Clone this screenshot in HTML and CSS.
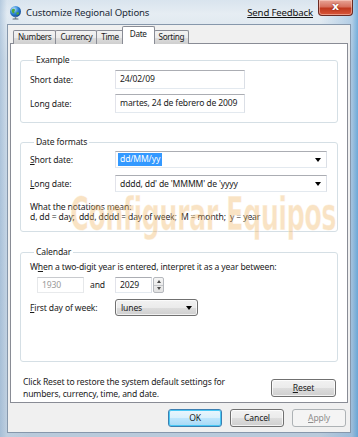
FILE: index.html
```html
<!DOCTYPE html>
<html>
<head>
<meta charset="utf-8">
<link rel="stylesheet" href="styles.css">
</head>
<body>
<div class="window">
  <div class="titlebar">
    <svg class="appicon" width="15" height="15" viewBox="0 0 15 15">
      <defs>
        <radialGradient id="g1" cx="0.35" cy="0.3" r="0.8">
          <stop offset="0" stop-color="#bfe6ff"/>
          <stop offset="0.5" stop-color="#2f86d6"/>
          <stop offset="1" stop-color="#0d3f8a"/>
        </radialGradient>
      </defs>
      <circle cx="7.5" cy="6.5" r="5.5" fill="url(#g1)"/>
      <path d="M4 4.5c1-1 2.5-1 3 .2.3 1-1 1.2-.6 2.3.3.8-.6 1.6-1.4 1.2C4 7.6 3.3 5.6 4 4.5z" fill="#4fa83a"/>
      <path d="M8.6 7.4c.8-.4 2.2-.2 2.5.6.2.8-.9 1.8-1.8 1.8-.6 0-1.2-1.6-.7-2.4z" fill="#4fa83a"/>
      <rect x="6.7" y="11.5" width="1.6" height="2.5" fill="#7a8a99"/>
      <rect x="4.5" y="13.4" width="6" height="1.2" rx="0.5" fill="#5d6b78"/>
    </svg>
    <span class="title">Customize Regional Options</span>
    <span class="spacer"></span>
    <a class="feedback">Send Feedback</a>
    <div class="close"><span>x</span></div>
  </div>
  <div class="client">
    <div class="tabs">
      <div class="tab">Numbers</div>
      <div class="tab">Currency</div>
      <div class="tab">Time</div>
      <div class="tab active">Date</div>
      <div class="tab">Sorting</div>
    </div>
    <div class="panel">
      <fieldset class="group g-example">
        <legend>Example</legend>
        <div class="row">
          <span class="label">Short date:</span>
          <div class="textbox">24/02/09</div>
        </div>
        <div class="row">
          <span class="label">Long date:</span>
          <div class="textbox">martes, 24 de febrero de 2009</div>
        </div>
      </fieldset>

      <fieldset class="group g-formats">
        <legend>Date formats</legend>
        <div class="row">
          <span class="label"><u>S</u>hort date:</span>
          <div class="combo edit"><span class="sel">dd/MM/yy</span><span class="arrow"></span></div>
        </div>
        <div class="row">
          <span class="label"><u>L</u>ong date:</span>
          <div class="combo edit"><span class="val">dddd, dd' de 'MMMM' de 'yyyy</span><span class="arrow"></span></div>
        </div>
        <div class="notes">
          <div>What the notations mean:</div>
          <div>d, dd = day;&nbsp; ddd, dddd = day of week;&nbsp; M = month;&nbsp; y = year</div>
        </div>
      </fieldset>

      <fieldset class="group g-calendar">
        <legend>Calendar</legend>
        <div class="line">W<u>h</u>en a two-digit year is entered, interpret it as a year between:</div>
        <div class="years">
          <div class="textbox disabled y1">1930</div>
          <span class="and">and</span>
          <div class="textbox y2">2029</div>
          <div class="spin">
            <div class="spinbtn"><span class="up"></span></div>
            <div class="spinbtn"><span class="down"></span></div>
          </div>
        </div>
        <div class="row">
          <span class="label"><u>F</u>irst day of week:</span>
          <div class="combo btn"><span class="val">lunes</span><span class="arrow"></span></div>
        </div>
      </fieldset>

      <div class="reset-row">
        <div class="reset-text">Click Reset to restore the system default settings for<br>numbers, currency, time, and date.</div>
        <div class="button reset"><u>R</u>eset</div>
      </div>
    </div>
    <div class="buttons">
      <div class="button default">OK</div>
      <div class="button">Cancel</div>
      <div class="button disabled"><u>A</u>pply</div>
    </div>
    <div class="watermark">Configurar Equipos</div>
  </div>
</div>
</body>
</html>
```

FILE: styles.css
```css
* { box-sizing: border-box; }
html, body { margin: 0; padding: 0; }
body {
  width: 358px;
  height: 437px;
  overflow: hidden;
  font-family: "Noto Sans", "Open Sans", sans-serif;
  font-size: 8.6px;
  letter-spacing: -0.15px;
  color: #1b1b1b;
}
.window {
  width: 358px;
  height: 437px;
  display: flex;
  flex-direction: column;
  background:
    linear-gradient(90deg, rgba(150,180,210,0.55) 0px, rgba(210,225,240,0.2) 7px, rgba(255,255,255,0) 30px, rgba(255,255,255,0) 320px, rgba(120,170,215,0.45) 352px, rgba(70,150,210,0.7) 358px),
    linear-gradient(180deg, #d9e4ee 0px, #e6edf3 14px, #cfdbe7 60px, #c3d3e3 200px, #b9cadb 437px);
}
.titlebar {
  height: 24px;
  flex: none;
  display: flex;
  align-items: flex-start;
  padding: 4px 0 0 8px;
}
.appicon { flex: none; margin-top: 1px; }
.title {
  margin-left: 3px;
  margin-top: 2px;
  font-size: 9.6px;
  color: #1c2a38;
}
.spacer { flex: 1; }
.feedback {
  margin-top: 2px;
  font-size: 9.6px;
  color: #111;
  text-decoration: underline;
  margin-right: 5px;
}
.close {
  width: 35px;
  height: 16px;
  margin-top: -4px;
  margin-right: 5px;
  border: 1px solid #6b2a22;
  border-top: none;
  border-radius: 0 0 4px 4px;
  background: linear-gradient(180deg, #e8a597 0%, #d7705d 45%, #c0391f 55%, #d8573a 100%);
  box-shadow: inset 0 0 0 1px rgba(255,220,210,0.5);
  display: flex;
  align-items: center;
  justify-content: center;
}
.close span {
  color: #fff;
  font-family: "DejaVu Sans", sans-serif;
  font-weight: bold;
  font-size: 11px;
  line-height: 1;
  margin-top: -2px;
  text-shadow: 0 0 2px #7a1a0a;
}
.client {
  position: relative;
  flex: 1;
  margin: 0 7px 4px 7px;
  background: #f0f0f0;
  border: 1px solid #8697ab;
  display: flex;
  flex-direction: column;
  padding: 1px 1px 0 2px;
  overflow: hidden;
}
.tabs {
  display: flex;
  align-items: flex-end;
  height: 18px;
  padding-left: 3px;
  position: relative;
  z-index: 2;
  margin-bottom: -1px;
}
.tab {
  height: 14px;
  padding: 0 4px;
  border: 1px solid #898c95;
  border-bottom: none;
  margin-right: -1px;
  background: linear-gradient(180deg, #f2f2f2 0%, #ebebeb 50%, #dddddd 51%, #cfcfcf 100%);
  line-height: 12px;
  border-radius: 2px 2px 0 0;
  font-size: 8.2px;
  letter-spacing: -0.35px;
}
.tab.active {
  height: 18px;
  background: #fff;
  margin: 0 0 0 -1px;
  padding: 0 7px;
  position: relative;
  z-index: 2;
  line-height: 14px;
}
.tab.active + .tab { margin-left: -1px; }
.panel {
  width: 338px;
  height: 360px;
  background: #fff;
  border: 1px solid #898c95;
  padding: 10px 9px 0 9px;
  display: flex;
  flex-direction: column;
}
.group {
  margin: 0;
  border: 1px solid #d5dfe5;
  border-radius: 3px;
  padding: 0 9px;
  min-width: 0;
}
.group legend {
  padding: 0 2px;
  margin-left: 4px;
  line-height: 12px;
}
.row {
  display: flex;
  align-items: center;
}
.label {
  width: 85px;
  flex: none;
}
.g-example { height: 69px; padding-top: 4px; }
.g-example .row + .row { margin-top: 5px; }
.textbox {
  height: 19px;
  width: 130px;
  background: #fff;
  border: 1px solid;
  border-color: #abadb3 #dbdfe6 #e3e9ef #e2e3ea;
  padding-left: 4px;
  line-height: 17px;
  white-space: nowrap;
  overflow: hidden;
}
.g-formats { margin-top: 13px; height: 96px; padding-top: 3px; }
.g-formats .row + .row { margin-top: 7px; }
.combo {
  height: 17px;
  display: flex;
  align-items: center;
  position: relative;
}
.combo.edit {
  width: 212px;
  background: #fff;
  border: 1px solid;
  border-color: #abadb3 #dbdfe6 #e3e9ef #e2e3ea;
  padding-left: 2px;
}
.combo .sel {
  background: #3399ff;
  color: #fff;
  padding: 0 2px;
  line-height: 13px;
}
.combo .val { padding-left: 2px; }
.arrow {
  position: absolute;
  right: 5px;
  top: 6px;
  width: 0;
  height: 0;
  border-left: 3.5px solid transparent;
  border-right: 3.5px solid transparent;
  border-top: 4px solid #000;
}
.notes {
  margin-top: 10px;
  line-height: 10px;
}
.g-calendar { margin-top: 14px; height: 116px; padding-top: 3px; }
.line { line-height: 12px; }
.years {
  display: flex;
  align-items: center;
  margin-top: 4px;
  margin-left: 7px;
}
.years .textbox { height: 16px; line-height: 14px; }
.y1 { width: 47px; }
.y1.disabled { color: #9a9a9a; border-color: #c8cace #e6e8ea #e8eaec #e6e8ea; }
.and { width: 31px; padding-left: 6px; }
.y2 { width: 37px; }
.spin {
  margin-left: 1px;
  width: 11px;
  height: 16px;
  display: flex;
  flex-direction: column;
  border: 1px solid #b5b8bd;
  border-radius: 2px;
  background: linear-gradient(180deg, #f5f5f5, #e2e2e2);
}
.spinbtn {
  flex: 1;
  display: flex;
  align-items: center;
  justify-content: center;
}
.spinbtn + .spinbtn { border-top: 1px solid #c4c6c9; }
.up { width: 0; height: 0; border-left: 2px solid transparent; border-right: 2px solid transparent; border-bottom: 3px solid #4a4a4a; }
.down { width: 0; height: 0; border-left: 2px solid transparent; border-right: 2px solid transparent; border-top: 3px solid #4a4a4a; }
.g-calendar .row { margin-top: 6px; }
.combo.btn {
  width: 83px;
  border: 1px solid #707070;
  border-radius: 3px;
  background: linear-gradient(180deg, #f2f2f2 0%, #ebebeb 50%, #dddddd 51%, #cfcfcf 100%);
  box-shadow: inset 0 0 0 1px rgba(255,255,255,0.7);
  padding-left: 3px;
}
.reset-row {
  display: flex;
  align-items: center;
  margin-top: 14px;
  padding-left: 3px;
}
.reset-text { flex: 1; line-height: 12px; }
.button {
  width: 54px;
  height: 18px;
  border: 1px solid #707070;
  border-radius: 3px;
  background: linear-gradient(180deg, #f2f2f2 0%, #ebebeb 50%, #dddddd 51%, #cfcfcf 100%);
  box-shadow: inset 0 0 0 1px rgba(255,255,255,0.75);
  display: flex;
  align-items: center;
  justify-content: center;
}
.button.reset { width: 65px; margin-right: 2px; }
.buttons {
  display: flex;
  justify-content: flex-end;
  gap: 8px;
  padding: 6px 3px 0 0;
}
.button.default {
  border-color: #3c7fb1;
  background: linear-gradient(180deg, #eaf6fd 0%, #d9f0fc 50%, #bee6fd 51%, #a7d9f5 100%);
  box-shadow: inset 0 0 0 1px #48c8f5;
}
.button.disabled {
  color: #8d8d8d;
  border-color: #adb2b5;
  background: #f4f4f4;
  box-shadow: none;
}
.watermark {
  position: absolute;
  left: 62px;
  top: 166px;
  font-family: "DejaVu Sans Condensed", "DejaVu Sans", sans-serif;
  font-weight: bold;
  font-size: 46px;
  line-height: 46px;
  letter-spacing: -1px;
  color: rgba(240, 175, 85, 0.36);
  -webkit-text-stroke: 1px rgba(255,255,255,0.55);
  white-space: nowrap;
  pointer-events: none;
  transform: scaleX(0.62);
  transform-origin: left top;
}
```
